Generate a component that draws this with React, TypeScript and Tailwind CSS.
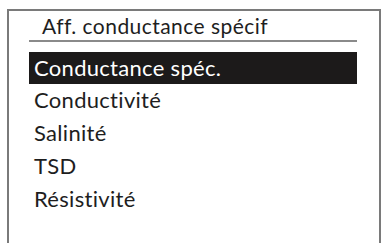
import React from 'react';

const items = ['Conductance spéc.', 'Conductivité', 'Salinité', 'TSD', 'Résistivité'];

export default function App() {
  const selected = 0;
  return (
    <div
      className="w-[382px] h-[243px] bg-white overflow-hidden pt-[9px] pl-[7px] [font-variant-ligatures:none]"
      style={{ fontFamily: 'Lato, "Noto Sans", sans-serif' }}
    >
      <div className="w-[374px] h-[240px] border-t-2 border-l-2 border-r-2 border-[#7a7a7a] pl-[20px] pr-[22px]">
        <div className="h-[29px] pl-[13px] pt-[1px] text-[21px] tracking-[0.45px] leading-[28px] text-[#1e1e1e]">Aff. conductance spécif</div>
        <div className="h-[2px] bg-[#8a8a8a]" />
        <ul className="mt-[10px]">
          {items.map((label, i) => (
            <li
              key={label}
              className={`pl-[5px] text-[22px] tracking-[0.3px] leading-[31px] ${
                i === selected ? 'bg-[#1c1a1a] text-white h-[32px]' : 'h-[33px] text-[#1e1e1e]'
              }`}
            >
              {label}
            </li>
          ))}
        </ul>
      </div>
    </div>
  );
}
